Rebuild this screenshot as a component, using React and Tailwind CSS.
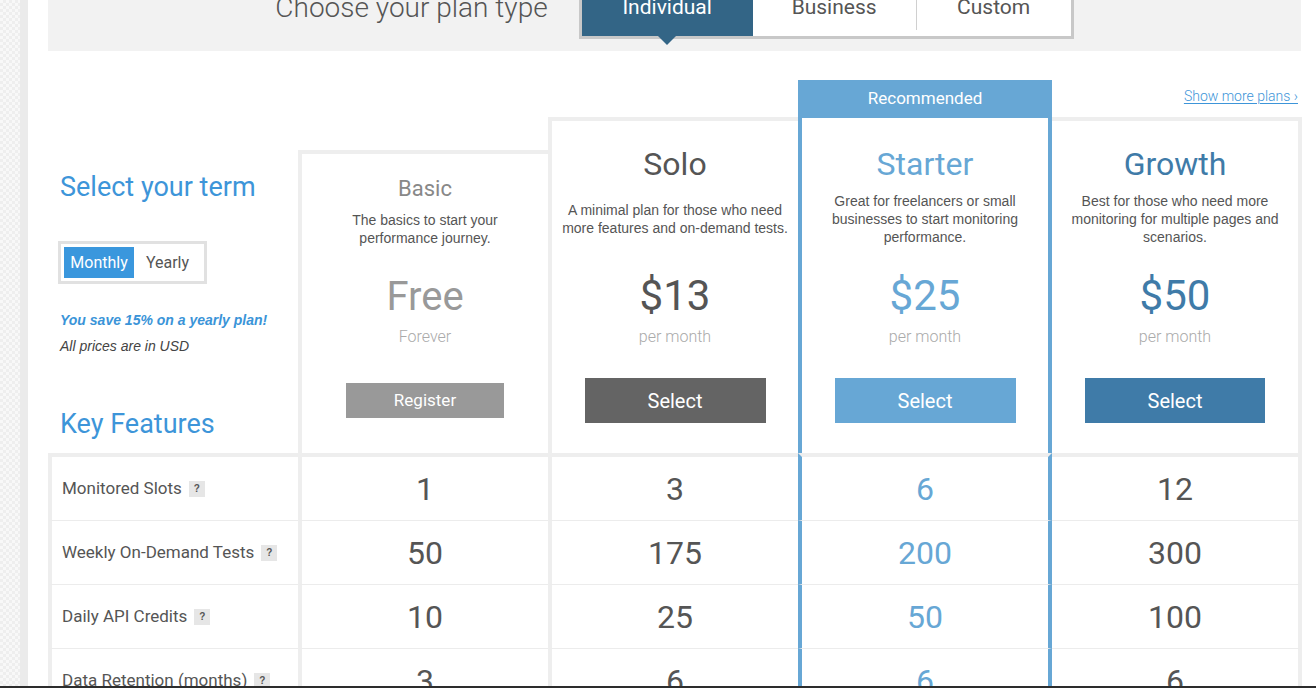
const rows = [
  ["Monitored Slots", "1", "3", "6", "12"],
  ["Weekly On-Demand Tests", "50", "175", "200", "300"],
  ["Daily API Credits", "10", "25", "50", "100"],
  ["Data Retention (months)", "3", "6", "6", "6"],
];

function Header() {
  return (
    <div className="flex h-[51px] w-[1253px] justify-center gap-[31px] bg-[#f2f2f2]">
      <div className="mt-[-8px] h-[32px] whitespace-nowrap text-[28px] font-light leading-[32px] text-[#555]">
        Choose your plan type
      </div>
      <div className="mt-[-20px] flex h-[59px] border-x-[3px] border-b-[3px] border-[#c8c8c8] bg-white">
        <div className="relative flex w-[171px] items-center justify-center bg-[#336586] text-[21px] text-white">
          Individual
          <span className="absolute left-1/2 top-full z-10 h-0 w-0 -translate-x-1/2 border-x-[9px] border-t-[9px] border-x-transparent border-t-[#336586]" />
        </div>
        <div className="flex w-[163px] items-center justify-center text-[21px] text-[#555]">Business</div>
        <div className="h-[50px] w-px bg-[#d0d0d0]" />
        <div className="flex w-[154px] items-center justify-center text-[21px] text-[#555]">Custom</div>
      </div>
    </div>
  );
}

function LabelCol() {
  return (
    <div className="flex h-full w-[250px] shrink-0 flex-col self-start pl-[12px] pt-[120px]">
      <div className="text-[27px] leading-[32px] text-[#3d95d9]">Select your term</div>
      <div className="ml-[-2px] mt-[38px] flex h-[43px] w-[149px] items-center border-[3px] border-[#e1e1e1] p-[3px]">
        <div className="flex h-[31px] w-[70px] items-center justify-center bg-[#3a97dd] text-[16px] text-white">
          Monthly
        </div>
        <div className="flex flex-1 items-center justify-center text-[16px] text-[#555]">Yearly</div>
      </div>
      <div className="mt-[27px] font-['Liberation_Sans',Arial,sans-serif] text-[14px] font-bold italic leading-[18px] text-[#3a94d8]">
        You save 15% on a yearly plan!
      </div>
      <div className="mt-[8px] font-['Liberation_Sans',Arial,sans-serif] text-[14px] italic leading-[18px] text-[#444]">
        All prices are in USD
      </div>
      <div className="mt-[53px] text-[27px] leading-[32px] text-[#3d95d9]">Key Features</div>
    </div>
  );
}

function Desc({ children, h }) {
  return (
    <div
      className={
        "flex items-center justify-center px-[8px] text-center font-['Liberation_Sans',Arial,sans-serif] text-[14px] leading-[18px] text-[#555] " +
        h
      }
    >
      <div>{children}</div>
    </div>
  );
}

function Plans() {
  return (
    <div className="flex h-[402px] items-end">
      <LabelCol />

      {/* Basic */}
      <div className="flex h-[303px] w-[250px] shrink-0 flex-col items-center border-l-4 border-t-4 border-[#eeeeee] pt-[21px]">
        <div className="text-[22px] leading-[28px] text-[#888]">Basic</div>
        <Desc h="mt-[8px] h-[36px] w-full">
          The basics to start your
          <br />
          performance journey.
        </Desc>
        <div className="mt-[25px] text-[40px] leading-[50px] text-[#999]">Free</div>
        <div className="mt-[5px] text-[16px] font-light leading-[20px] text-[#aaa]">Forever</div>
        <div className="mt-[36px] flex h-[35px] w-[158px] items-center justify-center bg-[#999] text-[17px] text-white">
          Register
        </div>
      </div>

      {/* Solo */}
      <div className="flex h-[336px] w-[250px] shrink-0 flex-col items-center border-l-4 border-t-4 border-[#eeeeee] pt-[23px]">
        <div className="text-[32px] leading-[40px] text-[#555]">Solo</div>
        <Desc h="mt-[8px] h-[54px] w-full">
          A minimal plan for those who need
          <br />
          more features and on-demand tests.
        </Desc>
        <div className="mt-[25px] text-[42px] leading-[50px] text-[#555]">$13</div>
        <div className="mt-[6px] text-[16px] font-light leading-[20px] text-[#aaa]">per month</div>
        <div className="mt-[31px] flex h-[45px] w-[181px] items-center justify-center bg-[#646464] text-[20px] text-white">
          Select
        </div>
      </div>

      {/* Starter */}
      <div className="flex h-[373px] w-[254px] shrink-0 flex-col">
        <div className="flex h-[38px] items-center justify-center bg-[#67a7d5] text-[17px] text-white">
          Recommended
        </div>
        <div className="flex flex-1 flex-col items-center border-x-4 border-[#67a7d5] pt-[26px]">
          <div className="text-[32px] leading-[40px] text-[#67a7d5]">Starter</div>
          <Desc h="mt-[8px] h-[54px] w-full">
            Great for freelancers or small
            <br />
            businesses to start monitoring
            <br />
            performance.
          </Desc>
          <div className="mt-[25px] text-[42px] leading-[50px] text-[#67a7d5]">$25</div>
          <div className="mt-[6px] text-[16px] font-light leading-[20px] text-[#aaa]">per month</div>
          <div className="mt-[31px] flex h-[45px] w-[181px] items-center justify-center bg-[#67a7d5] text-[20px] text-white">
            Select
          </div>
        </div>
      </div>

      {/* Growth */}
      <div className="flex h-[373px] w-[250px] shrink-0 flex-col">
        <div className="flex h-[37px] items-center justify-end pb-[4px] pr-[4px]">
          <span className="text-[14px] font-light text-[#3d95d9] underline underline-offset-2">Show more plans ›</span>
        </div>
        <div className="flex flex-1 flex-col items-center border-r-4 border-t-4 border-[#eeeeee] pt-[23px]">
          <div className="text-[32px] leading-[40px] text-[#3f7ba8]">Growth</div>
          <Desc h="mt-[8px] h-[54px] w-full">
            Best for those who need more
            <br />
            monitoring for multiple pages and
            <br />
            scenarios.
          </Desc>
          <div className="mt-[25px] text-[42px] leading-[50px] text-[#3f7ba8]">$50</div>
          <div className="mt-[6px] text-[16px] font-light leading-[20px] text-[#aaa]">per month</div>
          <div className="mt-[31px] flex h-[45px] w-[180px] items-center justify-center bg-[#3f7ba8] text-[20px] text-white">
            Select
          </div>
        </div>
      </div>
    </div>
  );
}

function Table() {
  return (
    <div className="flex flex-col">
      {rows.map((r, i) => {
        const top = i === 0 ? "border-t-4 h-[68px]" : "h-[64px]";
        return (
          <div key={r[0]} className="flex">
            <div
              className={
                "flex w-[250px] shrink-0 items-center border-b border-l-4 border-b-[#ececec] border-l-[#eeeeee] border-t-[#eeeeee] pl-[10px] text-[17px] text-[#555] " +
                top
              }
            >
              {r[0]}
              <span className="ml-[7px] inline-flex h-[16px] w-[16px] items-center justify-center bg-[#e6e6e6] font-['Liberation_Sans',Arial,sans-serif] text-[10px] font-bold text-[#555]">
                ?
              </span>
            </div>
            <div
              className={
                "flex w-[250px] shrink-0 items-center justify-center border-b border-l-4 border-b-[#ececec] border-l-[#eeeeee] border-t-[#eeeeee] text-[32px] text-[#555] " +
                top
              }
            >
              {r[1]}
            </div>
            <div
              className={
                "flex w-[250px] shrink-0 items-center justify-center border-b border-l-4 border-b-[#ececec] border-l-[#eeeeee] border-t-[#eeeeee] text-[32px] text-[#555] " +
                top
              }
            >
              {r[2]}
            </div>
            <div
              className={
                "flex w-[254px] shrink-0 items-center justify-center border-x-4 border-b border-b-[#ececec] border-x-[#67a7d5] border-t-[#eeeeee] text-[32px] text-[#67a7d5] " +
                top
              }
            >
              {r[3]}
            </div>
            <div
              className={
                "flex w-[250px] shrink-0 items-center justify-center border-b border-r-4 border-b-[#ececec] border-r-[#eeeeee] border-t-[#eeeeee] text-[32px] text-[#555] " +
                top
              }
            >
              {r[4]}
            </div>
          </div>
        );
      })}
    </div>
  );
}

export default function App() {
  return (
    <div className="relative flex h-[688px] w-[1316px] overflow-hidden bg-white font-['Roboto',sans-serif] text-[#555]">
      <div className="w-[20px] shrink-0 bg-[#f3f3f3] bg-[repeating-conic-gradient(#eeeeee_0%_25%,#f8f8f8_0%_50%)] bg-[length:6px_6px]" />
      <div className="w-[8px] shrink-0 bg-[#ebebeb]" />
      <div className="ml-[20px] w-[1254px] shrink-0">
        <Header />
        <Plans />
        <Table />
      </div>
      <div className="absolute bottom-0 left-0 right-0 h-[2px] bg-[#2d2d2d]" />
    </div>
  );
}
